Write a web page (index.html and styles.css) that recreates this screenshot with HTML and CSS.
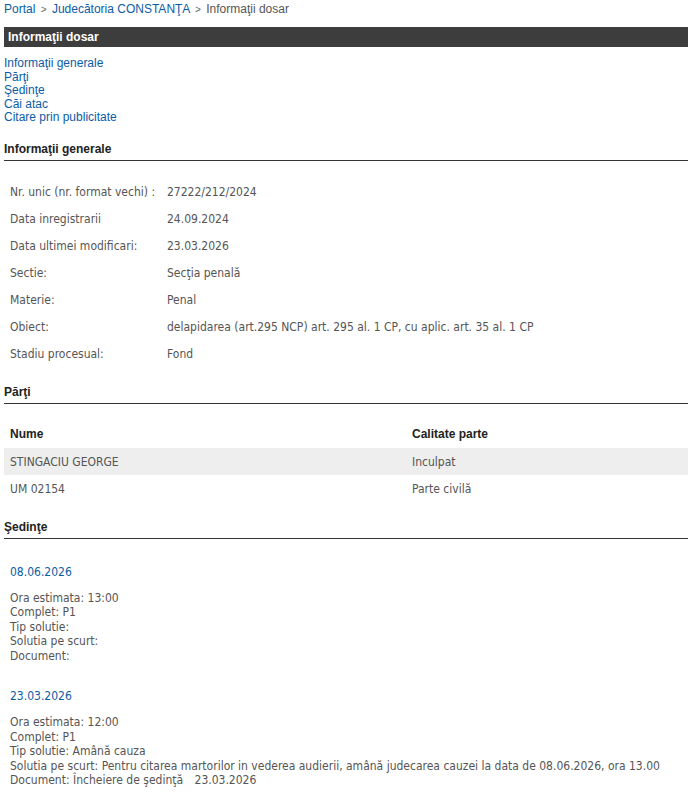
FILE: index.html
```html
<!DOCTYPE html>
<html lang="ro">
<head>
    <meta charset="UTF-8">
    <title>Informaţii dosar - Judecătoria CONSTANŢA</title>
    <link rel="stylesheet" href="styles.css">
</head>
<body>
    <div class="page">
        <div class="breadcrumb">
            <a href="#">Portal</a>
            <span class="sep">&gt;</span>
            <a href="#">Judecătoria CONSTANŢA</a>
            <span class="sep">&gt;</span>
            <span class="current">Informaţii dosar</span>
        </div>

        <h1 class="title-bar">Informaţii dosar</h1>

        <ul class="toc">
            <li><a href="#generale">Informaţii generale</a></li>
            <li><a href="#parti">Părţi</a></li>
            <li><a href="#sedinte">Şedinţe</a></li>
            <li><a href="#cai">Căi atac</a></li>
            <li><a href="#citare">Citare prin publicitate</a></li>
        </ul>

        <h2 class="section" id="generale">Informaţii generale</h2>
        <table class="info">
            <tr><td class="label">Nr. unic (nr. format vechi) :</td><td>27222/212/2024</td></tr>
            <tr><td class="label">Data inregistrarii</td><td>24.09.2024</td></tr>
            <tr><td class="label">Data ultimei modificari:</td><td>23.03.2026</td></tr>
            <tr><td class="label">Sectie:</td><td>Secţia penală</td></tr>
            <tr><td class="label">Materie:</td><td>Penal</td></tr>
            <tr><td class="label">Obiect:</td><td>delapidarea (art.295 NCP) art. 295 al. 1 CP, cu aplic. art. 35 al. 1 CP</td></tr>
            <tr><td class="label">Stadiu procesual:</td><td>Fond</td></tr>
        </table>

        <h2 class="section" id="parti">Părţi</h2>
        <table class="parti">
            <tr><th class="col-name">Nume</th><th>Calitate parte</th></tr>
            <tr class="alt"><td>STINGACIU GEORGE</td><td>Inculpat</td></tr>
            <tr><td>UM 02154</td><td>Parte civilă</td></tr>
        </table>

        <h2 class="section" id="sedinte">Şedinţe</h2>
        <div class="sedinta">
            <div class="date">08.06.2026</div>
            <div class="details">
                Ora estimata: 13:00<br>
                Complet: P1<br>
                Tip solutie: <br>
                Solutia pe scurt: <br>
                Document:
            </div>
        </div>
        <div class="sedinta">
            <div class="date">23.03.2026</div>
            <div class="details">
                Ora estimata: 12:00<br>
                Complet: P1<br>
                Tip solutie: Amână cauza<br>
                Solutia pe scurt: Pentru citarea martorilor in vederea audierii, amână judecarea cauzei la data de 08.06.2026, ora 13.00<br>
                Document: Încheiere de şedinţă <span class="doc-date">23.03.2026</span>
            </div>
        </div>
    </div>
</body>
</html>
```

FILE: styles.css
```css
* {
    margin: 0;
    padding: 0;
    box-sizing: border-box;
}

body {
    font-family: "Liberation Sans", Arial, sans-serif;
    font-size: 12px;
    color: #222;
    background: #fff;
}

a {
    color: #0b5ca6;
    text-decoration: none;
}

.page {
    width: 688px;
    padding-left: 4px;
}

.breadcrumb {
    line-height: 18px;
    color: #555;
}

.breadcrumb .sep {
    font-size: 10px;
    color: #666;
    margin: 0 2px;
}

.title-bar {
    margin-top: 8px;
    height: 20px;
    line-height: 20px;
    padding-left: 4px;
    background: #3d3d3d;
    color: #fff;
    font-size: 12px;
    font-weight: bold;
}

.toc {
    list-style: none;
    margin-top: 10px;
    line-height: 13.5px;
}

.section {
    margin-top: 16.5px;
    font-size: 12px;
    font-weight: bold;
    line-height: 16px;
    padding-bottom: 3px;
    border-bottom: 1px solid #333;
    color: #222;
}

.info,
.parti {
    width: 100%;
    border-collapse: collapse;
    font-family: "DejaVu Sans Condensed", "DejaVu Sans", sans-serif;
    font-size: 12px;
    color: #555;
}

.info {
    margin-top: 17.5px;
    margin-bottom: 13.5px;
}

.info td {
    height: 27px;
    padding: 0 6px;
    vertical-align: middle;
    white-space: nowrap;
}

.info .label {
    width: 157px;
    padding-right: 0;
}

.parti {
    margin-top: 17px;
    margin-bottom: 10px;
}

.parti th {
    height: 27px;
    padding: 0 6px 2px;
    text-align: left;
    font-family: "Liberation Sans", Arial, sans-serif;
    font-weight: bold;
    color: #222;
}

.parti .col-name {
    width: 402px;
}

.parti td {
    height: 27px;
    padding: 0 6px;
}

.parti .alt td {
    background: #eeeeee;
}

.sedinta {
    padding-left: 6px;
    font-family: "DejaVu Sans Condensed", "DejaVu Sans", sans-serif;
    font-size: 12px;
    line-height: 14.5px;
    color: #555;
}

.sedinta .date {
    margin-top: 26px;
    margin-bottom: 11.5px;
    color: #0b5ca6;
}

.doc-date {
    margin-left: 8px;
}
```
